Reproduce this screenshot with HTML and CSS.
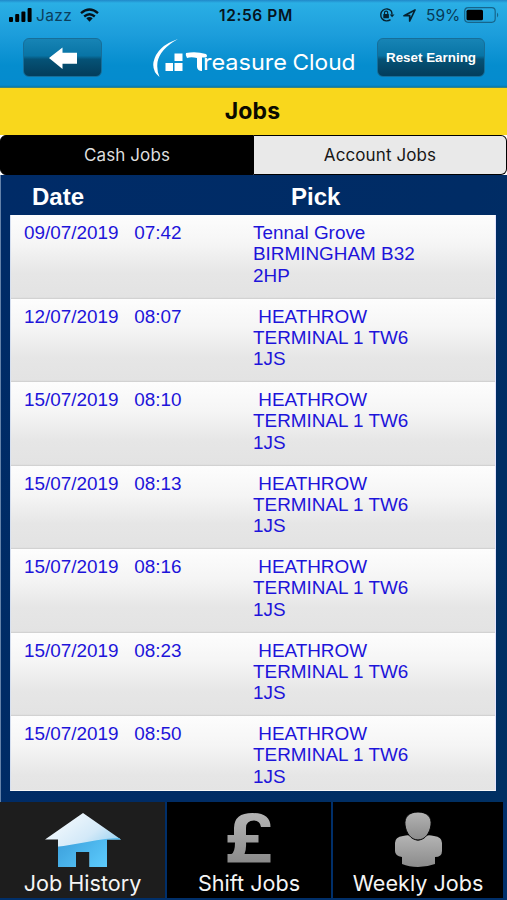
FILE: index.html
```html
<!DOCTYPE html>
<html lang="en">
<head>
<meta charset="utf-8">
<title>Jobs</title>
<link rel="stylesheet" href="styles.css">
</head>
<body>
<div class="app">
  <header class="top">
    <div class="status">
      <svg class="signal" viewBox="0 0 23 14"><rect x="0" y="9" width="4" height="5" rx="1"/><rect x="6.2" y="6" width="4" height="8" rx="1"/><rect x="12.4" y="3.5" width="4" height="10.5" rx="1"/><rect x="18.6" y="0" width="4" height="14" rx="1"/></svg>
      <span class="carrier">Jazz</span>
      <svg class="wifi" viewBox="0 0 19 14"><g fill="none" stroke="#06141d" stroke-width="2.4"><path d="M1 5.2Q9.500-2.200 18 5.200"/><path d="M4.200 8.500Q9.500 4 14.800 8.500"/></g><path d="M6.300 10.300Q9.500 7.800 12.700 10.300L9.500 13.700Z" fill="#06141d"/></svg>
      <span class="clock">12:56 PM</span>
      <svg class="lock" viewBox="0 0 16 14"><path d="M12.300 3A6 6 0 1 0 11.500 11.600M12.900 6.500A6 6 0 0 0 12.300 3" fill="none" stroke="#06222f" stroke-width="1.400"/><path d="M10.700 6.500H15.500L13.100 9.300Z" fill="#06222f"/><rect x="4.300" y="6" width="5.600" height="4.300" rx=".5" fill="#06222f"/><path d="M5.500 6V4.700a1.600 1.600 0 0 1 3.200 0V6" fill="none" stroke="#06222f" stroke-width="1.100"/></svg>
      <svg class="nav" viewBox="0 0 13 13"><path d="M1 6.700L12 1L6.700 12V6.700Z" fill="none" stroke="#06222f" stroke-width="1.700" stroke-linejoin="round"/></svg>
      <span class="percent">59%</span>
      <svg class="battery" viewBox="0 0 36 16"><rect x=".7" y=".7" width="30.500" height="14.600" rx="3.500" fill="none" stroke="#17658b" stroke-width="1.200"/><rect x="2.500" y="2.700" width="16.500" height="10.600" rx="1.500"/><path d="M33 5.500Q35.500 7.800 33 10.500Z" fill="#17658b"/></svg>
    </div>
    <div class="bar">
      <button class="btn back" aria-label="Back"><svg viewBox="0 0 30 22"><path d="M1 11L14.500 .5V5.800H29V16.800H14.500V22Z" fill="#fff"/></svg></button>
      <svg class="logo" viewBox="0 0 205 42">
        <path d="M25 1Q7 11 4.500 24Q3.500 33 6.500 39Q-1 33 .5 24Q4 8 25 1Z" fill="#fff"/>
        <g fill="#fff"><rect x="21.500" y="15.500" width="8" height="7.500"/><rect x="12.500" y="25" width="7.500" height="8"/><rect x="21.500" y="25" width="8" height="8"/><path d="M33 15Q43 13 53 16Q55 18 53 19.500L49 19.500V33Q44.500 33 44 29V20Q38 18.500 34 20Q32 17 33 15Z"/></g>
        <g class="logotype"><text x="50" y="32" textLength="84" lengthAdjust="spacingAndGlyphs">reasure</text><text x="139.500" y="32" textLength="63" lengthAdjust="spacingAndGlyphs">Cloud</text></g>
      </svg>
      <button class="btn reset">Reset Earning</button>
    </div>
  </header>
  <h1 class="title">Jobs</h1>
  <nav class="segments"><button class="seg on">Cash Jobs</button><button class="seg">Account Jobs</button></nav>
  <main class="panel">
    <div class="heads"><span class="h-date">Date</span><span class="h-pick">Pick</span></div>
    <ul class="list">
      <li><time>09/07/2019 &nbsp; 07:42</time><p>Tennal Grove<br>BIRMINGHAM B32<br>2HP</p></li>
      <li><time>12/07/2019 &nbsp; 08:07</time><p>&nbsp;HEATHROW<br>TERMINAL 1 TW6<br>1JS</p></li>
      <li><time>15/07/2019 &nbsp; 08:10</time><p>&nbsp;HEATHROW<br>TERMINAL 1 TW6<br>1JS</p></li>
      <li><time>15/07/2019 &nbsp; 08:13</time><p>&nbsp;HEATHROW<br>TERMINAL 1 TW6<br>1JS</p></li>
      <li><time>15/07/2019 &nbsp; 08:16</time><p>&nbsp;HEATHROW<br>TERMINAL 1 TW6<br>1JS</p></li>
      <li><time>15/07/2019 &nbsp; 08:23</time><p>&nbsp;HEATHROW<br>TERMINAL 1 TW6<br>1JS</p></li>
      <li><time>15/07/2019 &nbsp; 08:50</time><p>&nbsp;HEATHROW<br>TERMINAL 1 TW6<br>1JS</p></li>
    </ul>
  </main>
  <nav class="tabs">
    <button class="tab active">
      <svg viewBox="0 0 76 56"><defs><linearGradient id="ice" x1="0" y1="0" x2="1" y2="1"><stop offset="0" stop-color="#fff"/><stop offset=".5" stop-color="#d3e9f8"/><stop offset="1" stop-color="#62bdeb"/></linearGradient><linearGradient id="water" x1="0" y1="0" x2="1" y2=".4"><stop offset="0" stop-color="#3597d5"/><stop offset="1" stop-color="#5bc9fb"/></linearGradient><clipPath id="house"><path d="M38 1L76 27.500H62V55H44.500V40H31V55H13V27.500H0Z"/></clipPath></defs><g clip-path="url(#house)"><rect width="76" height="56" fill="url(#ice)"/><path d="M0 36Q22 34 42 30T76 26V56H0Z" fill="url(#water)"/></g></svg>
      <span>Job History</span>
    </button>
    <button class="tab">
      <svg viewBox="0 0 76 56"><defs><linearGradient id="steel" x1="0" y1="0" x2="0" y2="1"><stop offset="0" stop-color="#b4b4b4"/><stop offset="1" stop-color="#8b8b8b"/></linearGradient></defs><path d="M59.500 15H50Q49 8.500 43 8.500Q35 8.500 35 16V23H47.500V30.500H35Q35.500 37 33.500 42H59.500V50.500H16.500V42H20.500Q24 40 24 30.500H16.500V23H23V16Q23 1 41.500 1Q59.500 1 59.500 15Z" fill="url(#steel)"/></svg>
      <span>Shift Jobs</span>
    </button>
    <button class="tab">
      <svg viewBox="0 0 76 56"><path d="M23 24Q30 22 32 25Q38 32 44 25Q47 22 54 24Q62 25 62 31V39Q62 45 55 45V52Q47 55 38 55T22 52V45Q15 44 15 39V31Q15 25 23 24Z" fill="url(#steel)"/><path d="M38 0C47 0 52 5 51 13C50 21 45 28 38 28S26 21 25 13C24 5 29 0 38 0Z" fill="url(#steel)" stroke="#000" stroke-width="1"/></svg>
      <span>Weekly Jobs</span>
    </button>
  </nav>
</div>
</body>
</html>
```
FILE: styles.css
```css
* { box-sizing: border-box; }
body { margin: 0; background: #003068; }
button { border: 0; padding: 0; margin: 0; font: inherit; color: inherit; background: none; }
svg { display: block; flex: none; }
.app { width: 507px; height: 900px; display: flex; flex-direction: column; overflow: hidden; background: #002f6a; font-family: Inter, "Liberation Sans", sans-serif; }
.top { height: 88px; flex: none; background: linear-gradient(#2188c9 0, #2aafe5 3px, #1c9ddb 35px, #058dce 65px, #058bce 85px, #0879a8 87px, #668f62 88px); }
.status { height: 30px; display: flex; align-items: center; padding-left: 9px; color: #06141d; }
.signal { width: 23px; height: 14px; }
.carrier { width: 35px; margin-left: 4px; font-size: 15.5px; letter-spacing: .4px; color: #0b3f5d; }
.wifi { width: 19px; height: 14px; margin-left: 9px; }
.clock { width: 75px; margin-left: 120px; font-size: 15.5px; font-weight: 600; letter-spacing: .6px; white-space: nowrap; }
.lock { width: 16px; height: 14px; margin-left: 85px; }
.nav { width: 13px; height: 13px; margin-left: 8px; }
.percent { width: 34px; margin-left: 10px; font-size: 15.5px; color: #073a56; }
.battery { width: 36px; height: 16px; margin-left: 4px; }
.bar { display: flex; padding: 8px 0 0 23px; align-items: flex-start; }
.btn { height: 39px; border: 1px solid #176e99; border-radius: 6px; background: linear-gradient(#1784b5, #0874a5 45%, #055276 55%, #033f5e 95%); display: flex; align-items: center; justify-content: center; }
.back { width: 79px; }
.back svg { width: 30px; height: 22px; }
.logo { width: 205px; height: 42px; margin-left: 51px; }
.logotype { font-family: Inter, sans-serif; font-size: 22px; font-weight: 400; fill: #fff; }
.reset { width: 108px; margin-left: 19px; font: bold 13.4px "Liberation Sans", sans-serif; color: #fff; white-space: nowrap; }
.title { height: 47px; flex: none; margin: 0; background: #f9d71c; text-align: center; font-size: 23px; line-height: 46px; font-weight: 700; color: #0b0a00; padding-right: 2px; letter-spacing: .2px; }
.segments { height: 40px; flex: none; display: flex; background: #fff; }
.seg { width: 254px; height: 40px; border: 1px solid #000; border-radius: 0 6px 6px 0; background: #e9e9e9; color: #171717; font-size: 17px; letter-spacing: .1px; }
.seg + .seg { width: 253px; border-left: 0; }
.seg.on { border-radius: 6px 0 0 6px; background: #000; color: #dedede; }
.panel { height: 627px; flex: none; padding: 0 11px 0 9px; border-left: 1px solid #6482a9; background: linear-gradient(115deg, #002b67, #002c65 60%, #003063); }
.heads { height: 40px; display: flex; padding-left: 22px; font: bold 24px/44px "Liberation Sans", sans-serif; color: #fff; }
.h-date { width: 259px; }
.list { list-style: none; margin: 0; padding: 0; height: 576px; overflow: hidden; border-right: 1px solid #e4e4ff; border-left: 1px solid #d5dff0; border-bottom: 1px solid #f8f8f8; background: #e4e4e4; }
.list li { height: 83.5px; display: flex; padding: 7px 0 0 13px; background: linear-gradient(#fdfdfd, #f5f5f5 35%, #e6e6e6 70%, #e3e3e3 98%, #d2d2d2 99%, #d2d2d2); font: 18.9px/21.3px "Liberation Sans", sans-serif; color: #1d14da; }
.list time { width: 229px; white-space: nowrap; }
.list p { margin: 0; white-space: nowrap; }
.tabs { height: 96px; flex: none; display: grid; grid-template-columns: 165px 164px 170px; grid-template-rows: 96px; column-gap: 2px; }
.tab { background: #000; color: #f5f5f5; display: flex; flex-direction: column; align-items: center; padding-top: 10px; font-size: 21.6px; white-space: nowrap; overflow: hidden; }
.tab.active { background: #1d1d1d; }
.tab svg { width: 76px; height: 56px; }
.tab span { line-height: 30px; }
```
